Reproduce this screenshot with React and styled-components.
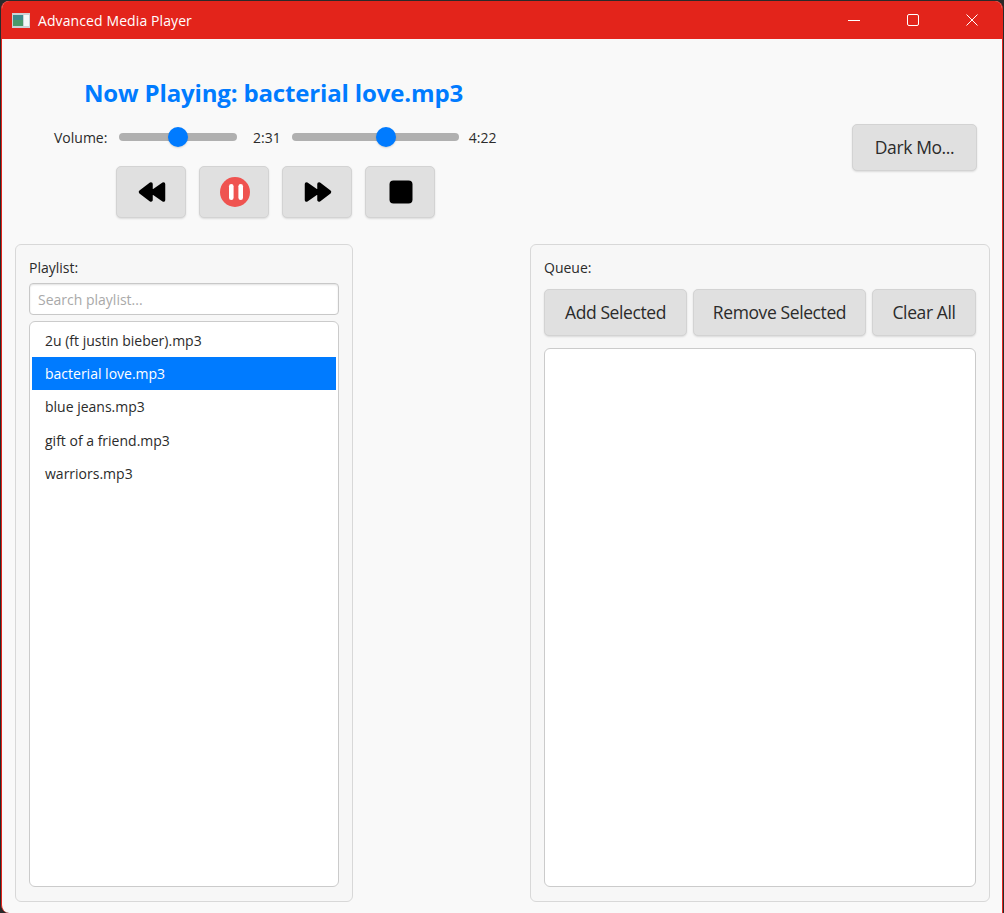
import React from 'react';
import styled, { createGlobalStyle } from 'styled-components';

const GlobalStyle = createGlobalStyle`
  * { box-sizing: border-box; }
  html, body { margin: 0; padding: 0; background: #2a2a2a; }
  body { font-family: "Open Sans", "Noto Sans", sans-serif; }
`;

const Window = styled.div`
  width: 1002px;
  height: 912px;
  margin: 1px 1px 0;
  display: flex;
  flex-direction: column;
  background: #f9f9f9;
  border: 1px solid #e3241b;
  border-top: none;
  border-bottom: none;
  border-radius: 8px 8px 0 8px;
  overflow: hidden;
  color: #2b2b2b;
`;

const TitleBar = styled.div`
  height: 38px;
  flex: none;
  display: flex;
  align-items: center;
  background: #e3241b;
  color: #fff;
  padding: 0 1px 0 10px;
`;

const AppIcon = styled.svg`
  width: 18px;
  height: 15px;
  margin-right: 8px;
`;

const WindowTitle = styled.span`
  font-size: 14px;
  letter-spacing: 0.1px;
  flex: 1;
`;

const WindowControl = styled.div`
  width: 59px;
  height: 38px;
  display: flex;
  align-items: center;
  justify-content: center;
`;

const Header = styled.div`
  height: 205px;
  flex: none;
  display: flex;
  justify-content: space-between;
  align-items: flex-start;
  padding: 0 25px 0 52px;
`;

const NowPlayingColumn = styled.div`
  width: 443px;
  display: flex;
  flex-direction: column;
  align-items: center;
  padding-top: 37px;
`;

const NowPlaying = styled.h1`
  margin: 0 4px 0 0;
  font-size: 24px;
  line-height: 34px;
  font-weight: 700;
  letter-spacing: -0.15px;
  color: #007bff;
  white-space: nowrap;
`;

const SliderRow = styled.div`
  width: 100%;
  height: 20px;
  margin-top: 17px;
  display: flex;
  align-items: center;
  gap: 10px;
  font-size: 14px;
`;

const VolumeLabel = styled.span`
  width: 55px;
`;

const TimeLabel = styled.span`
  margin: 0 1px 0 6px;
`;

const Slider = styled.input`
  appearance: none;
  margin: 0;
  padding: 0;
  width: ${(p) => p.$width}px;
  height: 20px;
  background: transparent;

  &::-webkit-slider-runnable-track {
    height: 8px;
    border-radius: 4px;
    background: #b0b0b0;
  }

  &::-webkit-slider-thumb {
    appearance: none;
    width: 20px;
    height: 20px;
    margin-top: -6px;
    border-radius: 50%;
    background: #007bff;
    box-shadow: 0 1px 2px rgba(0, 0, 0, 0.15);
  }
`;

const Transport = styled.div`
  display: flex;
  gap: 13px;
  margin-top: 19px;
`;

const Button = styled.button`
  height: 47px;
  width: ${(p) => p.$width}px;
  padding: 0 0 2px;
  display: flex;
  align-items: center;
  justify-content: center;
  flex: none;
  background: #e0e0e0;
  border: 1px solid #d3d3d3;
  border-radius: 5px;
  box-shadow: 0 1px 2px rgba(0, 0, 0, 0.12);
  font-family: inherit;
  font-size: 17.5px;
  letter-spacing: -0.4px;
  color: #2b2b2b;
`;

const IconButton = styled(Button)`
  width: 70px;
  height: 52px;
  padding: 0 0 0 1px;
`;

const DarkModeButton = styled(Button)`
  margin-top: 85px;
`;

const Lists = styled.div`
  flex: 1;
  display: flex;
  justify-content: space-between;
  padding: 0 12px 11px 13px;
  min-height: 0;
`;

const Panel = styled.section`
  width: ${(p) => p.$width}px;
  display: flex;
  flex-direction: column;
  padding: 14px 13px 14px 13px;
  background: #f7f7f7;
  border: 1px solid #d8d8d8;
  border-radius: 6px;
`;

const PanelLabel = styled.div`
  height: 20px;
  font-size: 14px;
  line-height: 18px;
`;

const SearchInput = styled.input`
  width: 100%;
  height: 32px;
  flex: none;
  padding: 0 8px;
  margin-top: 4px;
  background: #fff;
  border: 1px solid #c8c8c8;
  border-radius: 4px;
  box-shadow: inset 0 1px 2px rgba(0, 0, 0, 0.12);
  font-family: inherit;
  font-size: 14px;

  &::placeholder {
    color: #a9a9a9;
    opacity: 1;
  }
`;

const ListBox = styled.ul`
  flex: 1;
  margin: ${(p) => p.$top}px 0 0;
  padding: 2px 2px;
  list-style: none;
  background: #fff;
  border: 1px solid #cbcbcb;
  border-radius: 6px;
`;

const ListItem = styled.li`
  height: 33.2px;
  display: flex;
  align-items: center;
  padding-left: 13px;
  font-size: 14px;
  color: ${(p) => (p.$selected ? '#fff' : '#2b2b2b')};
  background: ${(p) => (p.$selected ? '#007bff' : 'transparent')};
`;

const QueueActions = styled.div`
  display: flex;
  gap: 6px;
  margin-top: 10px;
  height: 47px;
  flex: none;
`;

const tracks = [
  '2u (ft justin bieber).mp3',
  'bacterial love.mp3',
  'blue jeans.mp3',
  'gift of a friend.mp3',
  'warriors.mp3',
];

const RewindIcon = () => (
  <svg width="28" height="22" viewBox="0 0 28 22">
    <path d="M13 3 L2.5 11 L13 19 Z M25.5 3 L14 11 L25.5 19 Z" fill="#000" stroke="#000" strokeWidth="3.5" strokeLinejoin="round" />
  </svg>
);

const ForwardIcon = () => (
  <svg width="28" height="22" viewBox="0 0 28 22">
    <path d="M2.5 3 L14 11 L2.5 19 Z M15 3 L25.5 11 L15 19 Z" fill="#000" stroke="#000" strokeWidth="3.5" strokeLinejoin="round" />
  </svg>
);

const PauseIcon = () => (
  <svg width="30" height="30" viewBox="0 0 30 30">
    <circle cx="15" cy="15" r="15" fill="#ef5350" />
    <rect x="9" y="7" width="4.6" height="16" rx="2.3" fill="#fff" />
    <rect x="18.4" y="7" width="4.6" height="16" rx="2.3" fill="#fff" />
  </svg>
);

const StopIcon = () => (
  <svg width="24" height="24" viewBox="0 0 24 24">
    <rect x="0.5" y="0.5" width="23" height="23" rx="4" fill="#000" />
  </svg>
);

const App = () => (
  <>
    <GlobalStyle />
    <Window>
      <TitleBar>
        <AppIcon viewBox="0 0 18 15">
          <rect width="18" height="15" fill="#c9d2d6" />
          <rect x="1" y="2" width="10" height="11" fill="#3f8a8c" />
          <rect x="1" y="7" width="10" height="6" fill="#4a9a6a" />
          <rect x="12" y="2" width="5" height="11" fill="#f4f7f7" />
        </AppIcon>
        <WindowTitle>Advanced Media Player</WindowTitle>
        <WindowControl>
          <svg width="12" height="12" viewBox="0 0 12 12">
            <path d="M0 6.5 H12" stroke="#fff" />
          </svg>
        </WindowControl>
        <WindowControl>
          <svg width="12" height="12" viewBox="0 0 12 12">
            <rect x="0.5" y="0.5" width="11" height="11" rx="1.5" fill="none" stroke="#fff" />
          </svg>
        </WindowControl>
        <WindowControl>
          <svg width="12" height="12" viewBox="0 0 12 12">
            <path d="M0.5 0.5 L11.5 11.5 M11.5 0.5 L0.5 11.5" stroke="#fff" />
          </svg>
        </WindowControl>
      </TitleBar>

      <Header>
        <NowPlayingColumn>
          <NowPlaying>Now Playing: bacterial love.mp3</NowPlaying>
          <SliderRow>
            <VolumeLabel>Volume:</VolumeLabel>
            <Slider type="range" $width={118} min="0" max="100" defaultValue="50" />
            <TimeLabel>2:31</TimeLabel>
            <Slider type="range" $width={167} min="0" max="262" defaultValue="151" />
            <span>4:22</span>
          </SliderRow>
          <Transport>
            <IconButton><RewindIcon /></IconButton>
            <IconButton><PauseIcon /></IconButton>
            <IconButton><ForwardIcon /></IconButton>
            <IconButton><StopIcon /></IconButton>
          </Transport>
        </NowPlayingColumn>
        <DarkModeButton $width={125}>Dark Mo...</DarkModeButton>
      </Header>

      <Lists>
        <Panel $width={338}>
          <PanelLabel>Playlist:</PanelLabel>
          <SearchInput placeholder="Search playlist..." />
          <ListBox $top={6}>
            {tracks.map((track, i) => (
              <ListItem key={track} $selected={i === 1}>{track}</ListItem>
            ))}
          </ListBox>
        </Panel>
        <Panel $width={460}>
          <PanelLabel>Queue:</PanelLabel>
          <QueueActions>
            <Button $width={143}>Add Selected</Button>
            <Button $width={173}>Remove Selected</Button>
            <Button $width={104}>Clear All</Button>
          </QueueActions>
          <ListBox $top={12} />
        </Panel>
      </Lists>
    </Window>
  </>
);

export default App;
